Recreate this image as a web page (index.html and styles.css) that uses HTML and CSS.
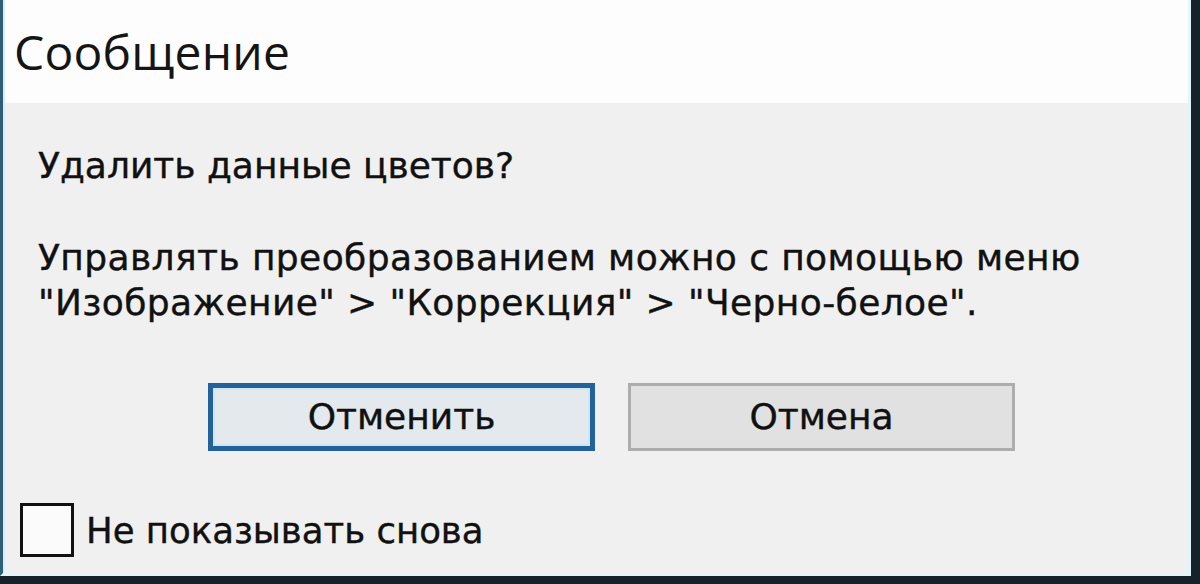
FILE: index.html
```html
<!DOCTYPE html>
<html lang="ru">
<head>
<meta charset="utf-8">
<title>Сообщение</title>
<link rel="stylesheet" href="styles.css">
</head>
<body>
<div class="window">
  <div class="titlebar"><span class="title">Сообщение</span></div>
  <div class="content">
    <p class="question">Удалить данные цветов?</p>
    <p class="info">Управлять преобразованием можно с помощью меню<br>"Изображение" &gt; "Коррекция" &gt; "Черно-белое".</p>
    <div class="buttons">
      <button class="btn btn-default">Отменить</button>
      <button class="btn">Отмена</button>
    </div>
    <label class="check">
      <span class="box"></span>
      <span class="check-label">Не показывать снова</span>
    </label>
  </div>
</div>
</body>
</html>
```

FILE: styles.css
```css
html, body {
  margin: 0;
  padding: 0;
}
body {
  width: 1200px;
  height: 584px;
  background: #15222a;
  overflow: hidden;
  font-family: "DejaVu Sans", Tahoma, sans-serif;
  color: #111;
}
.window {
  width: 1185px;
  height: 573px;
  border-left: 3px solid #2d5f78;
  border-right: 3px solid #e3f4fb;
  border-bottom: 3px solid #e3f4fb;
  background: #f0f0f0;
  display: flex;
  flex-direction: column;
  box-shadow: inset 2px 0 0 #d6eef8;
}
.titlebar {
  height: 103px;
  background: #fdfdfd;
  display: flex;
  align-items: center;
  padding-left: 11px;
  box-shadow: inset 2px 0 0 #d6eef8;
}
.title {
  font-family: "Open Sans", "Noto Sans", sans-serif;
  font-size: 48px;
  color: #151515;
  letter-spacing: 0.2px;
}
.content {
  flex: 1;
  padding-left: 35px;
  display: flex;
  flex-direction: column;
  -webkit-text-stroke: 0.4px #111;
}
.question {
  margin: 40px 0 0;
  font-size: 36px;
  line-height: 46px;
}
.info {
  margin: 46px 0 0;
  font-size: 36px;
  line-height: 45px;
  letter-spacing: 0.4px;
}
.buttons {
  display: flex;
  gap: 33px;
  margin: 58px 0 0 170px;
}
.btn {
  width: 387px;
  height: 68px;
  font-family: "DejaVu Sans", Tahoma, sans-serif;
  font-size: 36px;
  color: #111;
  -webkit-text-stroke: 0.4px #111;
  background: #e1e1e1;
  border: 3px solid #adadad;
  padding: 0 0 2px;
}
.btn-default {
  background: #e4e9ee;
  border: 5px solid #22619a;
  box-shadow: inset 0 0 0 2px #cfe6f7;
}
.check {
  display: flex;
  align-items: center;
  gap: 12px;
  margin: 52px 0 0 -18px;
}
.box {
  width: 48px;
  height: 48px;
  border: 3px solid #111;
  background: #fbfbfb;
}
.check-label {
  font-size: 35.5px;
}
```
